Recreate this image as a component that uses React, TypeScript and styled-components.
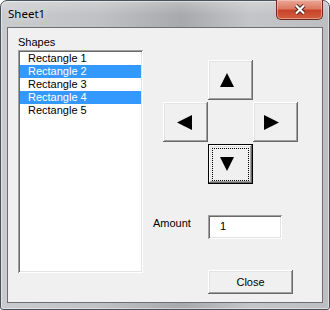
import { JSX } from "react";
import styled, { createGlobalStyle } from "styled-components";

const GlobalStyle = createGlobalStyle`
  html, body {
    margin: 0;
    padding: 0;
    background: #ffffff;
  }

  body {
    font-family: "Liberation Sans", Arial, sans-serif;
    font-size: 11px;
    color: #000000;
  }
`;

const StyledWindow = styled.div`
  box-sizing: border-box;
  width: 330px;
  height: 310px;
  display: flex;
  flex-direction: column;
  padding: 0 6px 6px 6px;
  border: 1px solid #4a525c;
  border-radius: 7px 7px 3px 3px;
  background:
    linear-gradient(180deg, rgba(255, 255, 255, 0.25) 0px, rgba(255, 255, 255, 0) 14px),
    linear-gradient(90deg, #c9cbce 0%, #bfc1c4 30%, #a7a9ac 55%, #c3c5c8 76%, #bcbec1 100%);
  box-shadow: inset 0 0 0 1px rgba(255, 255, 255, 0.45);
`;

const StyledTitleBar = styled.div`
  height: 26px;
  display: flex;
  justify-content: space-between;
  align-items: flex-start;
`;

const StyledTitle = styled.span`
  padding: 5px 0 0 1px;
  font-family: "Noto Sans", "Open Sans", sans-serif;
  font-size: 11.5px;
  line-height: 16px;
  color: #000000;
  text-shadow: 0 0 6px rgba(255, 255, 255, 0.9);
`;

const StyledCloseBtn = styled.div`
  box-sizing: border-box;
  width: 47px;
  height: 20px;
  margin-top: -1px;
  display: flex;
  align-items: center;
  justify-content: center;
  border: 1px solid #6e2a1f;
  border-top: none;
  border-radius: 0 0 5px 5px;
  background: linear-gradient(180deg, #e9a898 0%, #dc7a62 45%, #c8432a 55%, #d0603f 100%);
  box-shadow: inset 0 0 0 1px rgba(255, 220, 210, 0.45);
`;

const StyledClient = styled.div`
  flex: 1;
  display: flex;
  border: 1px solid #6c6f73;
  background: #f0f0f0;
`;

const StyledLeftCol = styled.div`
  padding: 8px 0 0 10px;
  display: flex;
  flex-direction: column;
`;

const StyledLabel = styled.span`
  line-height: 13px;
  margin-bottom: 1px;
`;

const StyledList = styled.ul`
  box-sizing: border-box;
  width: 125px;
  height: 223px;
  margin: 0;
  padding: 2px;
  list-style: none;
  background: #ffffff;
  box-shadow:
    inset 1px 1px #a0a0a0,
    inset -1px -1px #ffffff,
    inset 2px 2px #696969,
    inset -2px -2px #e3e3e3;
`;

const StyledItem = styled.li<{ $selected?: boolean }>`
  height: 13px;
  line-height: 13px;
  padding-left: 8px;
  white-space: nowrap;
  background: ${({ $selected }) => ($selected ? "#3399ff" : "transparent")};
  color: ${({ $selected }) => ($selected ? "#ffffff" : "#000000")};
`;

const StyledRightCol = styled.div`
  margin-left: 10px;
  display: flex;
  flex-direction: column;
`;

const StyledPad = styled.div`
  margin: 32px 0 0 10px;
  display: grid;
  grid-template-columns: repeat(3, 45px);
  grid-template-rows: repeat(3, 40px);
  row-gap: 2px;
`;

const StyledBtn = styled.button<{ $default?: boolean }>`
  position: relative;
  box-sizing: border-box;
  margin: 0;
  padding: 0;
  display: flex;
  align-items: center;
  justify-content: center;
  font-family: "Liberation Sans", Arial, sans-serif;
  font-size: 11px;
  color: #000000;
  background: #f0f0f0;
  border: ${({ $default }) => ($default ? "1px solid #000000" : "none")};
  box-shadow:
    inset -1px -1px #696969,
    inset 1px 1px #ffffff,
    inset -2px -2px #a0a0a0,
    inset 2px 2px #e3e3e3;

  &::after {
    content: "";
    display: ${({ $default }) => ($default ? "block" : "none")};
    position: absolute;
    inset: 3px 3px 2px 3px;
    border: 1px dotted #000000;
  }
`;

const StyledArrowBtn = styled(StyledBtn)<{ $col: number; $row: number; $shift: number }>`
  grid-column: ${({ $col }) => $col};
  grid-row: ${({ $row }) => $row};
  padding-right: ${({ $shift }) => $shift}px;
`;

const StyledAmountRow = styled.div`
  margin-top: 31px;
  display: flex;
  align-items: flex-start;
`;

const StyledAmountLabel = styled.span`
  width: 55px;
  padding-top: 2px;
  line-height: 13px;
`;

const StyledInput = styled.div`
  box-sizing: border-box;
  width: 74px;
  height: 24px;
  padding: 5px 0 0 12px;
  line-height: 13px;
  background: #ffffff;
  box-shadow:
    inset 1px 1px #a0a0a0,
    inset -1px -1px #ffffff,
    inset 2px 2px #696969,
    inset -2px -2px #e3e3e3;
`;

const StyledCloseDlg = styled(StyledBtn)`
  width: 85px;
  height: 24px;
  margin: 31px 0 0 55px;
`;

type Dir = "up" | "down" | "left" | "right";

const TRI: Record<Dir, string> = {
  up: "7,0 14,14 0,14",
  down: "0,0 14,0 7,14",
  left: "15,0 15,15 0,7.5",
  right: "0,0 15,7.5 0,15",
};

function Triangle({ dir }: { dir: Dir }): JSX.Element {
  const horiz = dir === "left" || dir === "right";
  const s = horiz ? 15 : 14;
  return (
    <svg width={s} height={s} viewBox={`0 0 ${s} ${s}`}>
      <polygon points={TRI[dir]} fill="#000000" />
    </svg>
  );
}

const shapes = ["Rectangle 1", "Rectangle 2", "Rectangle 3", "Rectangle 4", "Rectangle 5"];
const selected = [1, 3];

function App(): JSX.Element {
  return (
    <>
      <GlobalStyle />
      <StyledWindow>
        <StyledTitleBar>
          <StyledTitle>Sheet1</StyledTitle>
          <StyledCloseBtn>
            <svg width="12" height="11" viewBox="0 0 12 11">
              <path d="M2 1.5 L10 9.5 M10 1.5 L2 9.5" stroke="#4a2018" strokeWidth="4" />
              <path d="M2 1.5 L10 9.5 M10 1.5 L2 9.5" stroke="#ffffff" strokeWidth="2.2" />
            </svg>
          </StyledCloseBtn>
        </StyledTitleBar>

        <StyledClient>
          <StyledLeftCol>
            <StyledLabel>Shapes</StyledLabel>
            <StyledList>
              {shapes.map((s, i) => (
                <StyledItem key={s} $selected={selected.includes(i)}>
                  {s}
                </StyledItem>
              ))}
            </StyledList>
          </StyledLeftCol>

          <StyledRightCol>
            <StyledPad>
              <StyledArrowBtn $col={2} $row={1} $shift={8}>
                <Triangle dir="up" />
              </StyledArrowBtn>
              <StyledArrowBtn $col={1} $row={2} $shift={2}>
                <Triangle dir="left" />
              </StyledArrowBtn>
              <StyledArrowBtn $col={3} $row={2} $shift={8}>
                <Triangle dir="right" />
              </StyledArrowBtn>
              <StyledArrowBtn $col={2} $row={3} $shift={8} $default>
                <Triangle dir="down" />
              </StyledArrowBtn>
            </StyledPad>

            <StyledAmountRow>
              <StyledAmountLabel>Amount</StyledAmountLabel>
              <StyledInput>1</StyledInput>
            </StyledAmountRow>

            <StyledCloseDlg>Close</StyledCloseDlg>
          </StyledRightCol>
        </StyledClient>
      </StyledWindow>
    </>
  );
}

export default App;
